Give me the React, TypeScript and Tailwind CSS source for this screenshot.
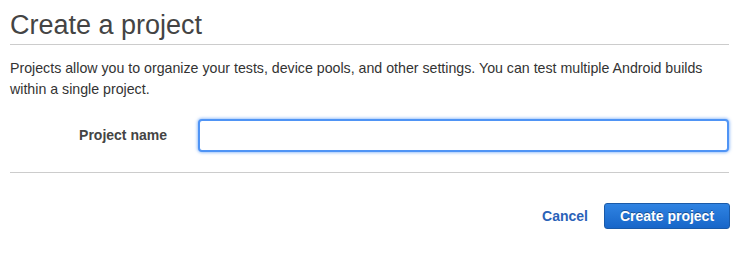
export default function App() {
  return (
    <div className="min-h-screen bg-white pl-[10px] pr-[9px] text-[#333] font-['Liberation_Sans',Arial,sans-serif]">
      {/* Header */}
      <h1 className="pt-[9px] pb-[3px] text-[27px] leading-[32px] font-normal text-[#444] border-b border-[#cccccc]">
        Create a project
      </h1>

      <p className="mt-[13px] text-[14.2px] leading-[21px] pr-[20px]">
        Projects allow you to organize your tests, device pools, and other settings. You can test
        multiple Android builds within a single project.
      </p>

      {/* Form */}
      <div className="mt-[19px] flex items-center pb-[20px] border-b border-[#cccccc]">
        <label className="w-[157px] text-right text-[14px] font-bold text-[#444]">Project name</label>
        <input
          type="text"
          className="ml-[31px] flex-1 h-[33px] rounded-[4px] border-2 border-[#4f94f5] bg-white shadow-[0_0_3px_1px_rgba(79,148,245,0.55)] outline-none px-2 text-[14px]"
        />
      </div>

      {/* Actions */}
      <div className="mt-[30px] -mr-px flex items-center justify-end">
        <button className="text-[14px] font-bold text-[#2a62b8] mr-[16px]">Cancel</button>
        <button className="h-[26px] w-[126px] rounded-[3px] border border-[#1a5aa8] bg-gradient-to-b from-[#2f83e2] to-[#1766c9] text-[14px] font-bold text-white [text-shadow:0_-1px_0_rgba(0,0,0,0.35)]">
          Create project
        </button>
      </div>
    </div>
  );
}
